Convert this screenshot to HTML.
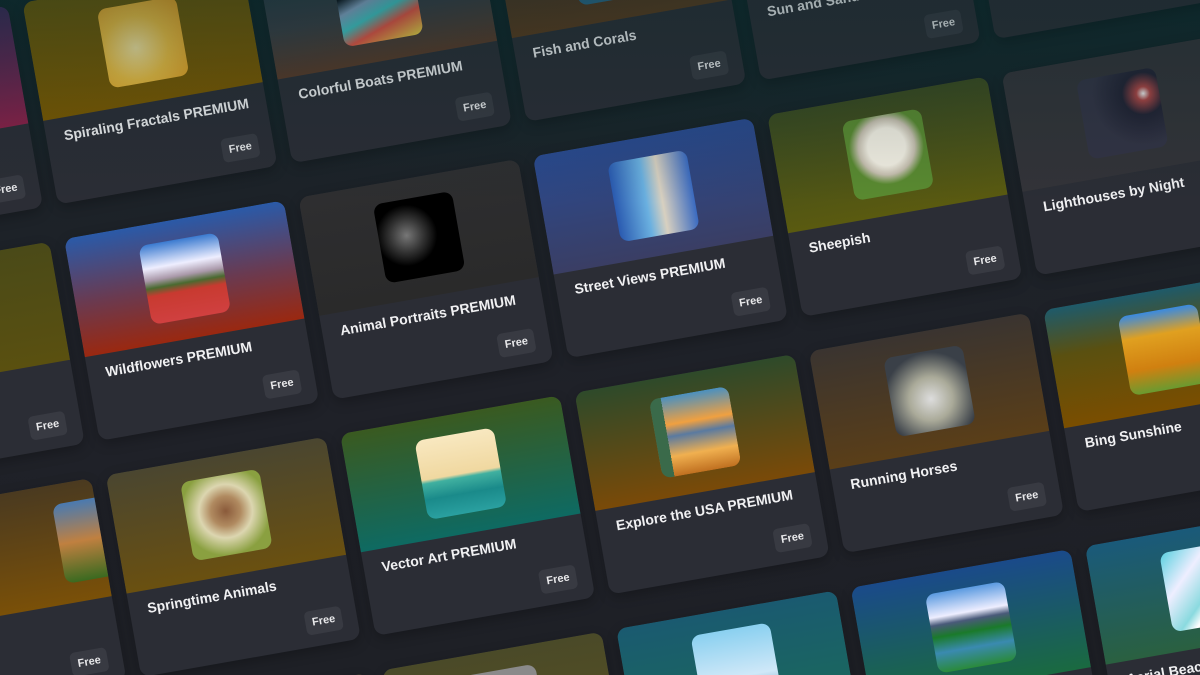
<!DOCTYPE html>
<html><head><meta charset="utf-8"><style>
html,body{margin:0;padding:0;width:1200px;height:675px;overflow:hidden;background:#1f2128;font-family:"Liberation Sans",sans-serif}
#w{position:relative;width:1200px;height:675px;overflow:hidden;background:linear-gradient(180deg,#10282b 0%,#1c2228 25%,#1f2128 60%,#1e2026 100%)}
#g{position:absolute;left:64px;top:239px;transform:rotate(-10deg);transform-origin:0 0}
.c{position:absolute;width:223px;height:205px;border-radius:10px;background:#2b2d35;overflow:hidden;box-shadow:0 4px 12px rgba(0,0,0,.25)}
.i{position:absolute;left:0;top:0;width:223px;height:120px}
.t{position:absolute;left:72px;top:20px;width:80px;height:80px;border-radius:9px;overflow:hidden}
.n{position:absolute;left:18px;top:130px;color:#f0f0f2;font-size:14px;font-weight:bold;white-space:nowrap}
.f{position:absolute;right:15px;bottom:12px;width:37px;height:24px;border-radius:5px;background:#383a42;color:#e8e8ea;font-size:11px;font-weight:bold;text-align:center;line-height:24px}
#ov{position:absolute;left:0;top:0;width:1200px;height:675px;background:linear-gradient(180deg,rgba(10,40,44,.35),rgba(0,0,0,0) 30%);pointer-events:none}
</style></head><body><div id="w">
<div id="g">
<div class="c" style="left:-238px;top:-240px"><div class="i" style="background:linear-gradient(#3a2a5a,#8a2048)"></div><div class="f">Free</div></div>
<div class="c" style="left:0;top:-240px"><div class="i" style="background:linear-gradient(#6a5a08,#7a5800)"></div><div class="t" style="background:radial-gradient(circle at 40% 55%,#f7e6a0,#f0c040 50%,#e8a020)"></div><div class="n">Spiraling Fractals PREMIUM</div><div class="f">Free</div></div>
<div class="c" style="left:238px;top:-240px"><div class="i" style="background:linear-gradient(#1c3a48,#3a3e44 60%,#5a3a28)"></div><div class="t" style="background:linear-gradient(160deg,#0a1018 30%,#8ac 45%,#4cc 60%,#e54 75%,#ed4)"></div><div class="n">Colorful Boats PREMIUM</div><div class="f">Free</div></div>
<div class="c" style="left:476px;top:-240px"><div class="i" style="background:linear-gradient(#3a3028,#5a3a1c)"></div><div class="t" style="background:#2a6a8a"></div><div class="n">Fish and Corals</div><div class="f">Free</div></div>
<div class="c" style="left:714px;top:-240px"><div class="i" style="background:linear-gradient(#2a3a4a,#3a3a40)"></div><div class="n">Sun and Sand</div><div class="f">Free</div></div>
<div class="c" style="left:952px;top:-240px"><div class="i" style="background:#303238"></div><div class="f">Free</div></div>
<div class="c" style="left:-238px;top:0"><div class="i" style="background:linear-gradient(#4a4a18,#5a5010)"></div><div class="f">Free</div></div>
<div class="c" style="left:0;top:0"><div class="i" style="background:linear-gradient(#2a5aa8,#6a3a50 55%,#9a2810)"></div><div class="t" style="background:linear-gradient(#3a7ad0 0%,#eef 30%,#a9a 45%,#4a6a30 55%,#c83a30 65%,#d04040)"></div><div class="n">Wildflowers PREMIUM</div><div class="f">Free</div></div>
<div class="c" style="left:238px;top:0"><div class="i" style="background:linear-gradient(#2e2e30,#2a2a2a)"></div><div class="t" style="background:radial-gradient(circle at 35% 45%,#777 0,#333 25%,#000 45%)"></div><div class="n">Animal Portraits PREMIUM</div><div class="f">Free</div></div>
<div class="c" style="left:476px;top:0"><div class="i" style="background:linear-gradient(#2a4a90,#3a3e64)"></div><div class="t" style="background:linear-gradient(90deg,#2a5ab0,#6ab0e0 40%,#d8d0c0 60%,#3a6ac0)"></div><div class="n">Street Views PREMIUM</div><div class="f">Free</div></div>
<div class="c" style="left:714px;top:0"><div class="i" style="background:linear-gradient(#3a4a20,#5a5a10)"></div><div class="t" style="background:radial-gradient(circle at 50% 40%,#f4f0e4 30%,#c8c0b0 45%,#5a8a30 60%)"></div><div class="n">Sheepish</div><div class="f">Free</div></div>
<div class="c" style="left:952px;top:0"><div class="i" style="background:#333338"></div><div class="t" style="background:radial-gradient(circle at 80% 30%,#eee 0,#a44 8%,#223 25%,#334 60%)"></div><div class="n">Lighthouses by Night</div><div class="f">Free</div></div>
<div class="c" style="left:-238px;top:240px"><div class="i" style="background:linear-gradient(#4a3a20,#7a5008)"></div><div class="t" style="left:180px;background:linear-gradient(#4a7ab0,#c08040 50%,#3a6a20)"></div><div class="f">Free</div></div>
<div class="c" style="left:0;top:240px"><div class="i" style="background:linear-gradient(#4a4630,#6a5010)"></div><div class="t" style="background:radial-gradient(circle at 50% 45%,#8a5a3a 0,#b08a60 25%,#dcd6b0 45%,#8aa040 75%)"></div><div class="n">Springtime Animals</div><div class="f">Free</div></div>
<div class="c" style="left:238px;top:240px"><div class="i" style="background:linear-gradient(#3a5a20,#0e6a62)"></div><div class="t" style="background:linear-gradient(#f8e8c0 0%,#f0d8a0 50%,#40b0a0 55%,#1a8a8a 75%,#2aa0a0)"></div><div class="n">Vector Art PREMIUM</div><div class="f">Free</div></div>
<div class="c" style="left:476px;top:240px"><div class="i" style="background:linear-gradient(#2e4a2a,#7a4a08)"></div><div class="t" style="background:linear-gradient(90deg,#3a6a4a 15%,transparent 15%),linear-gradient(#4a90c0,#f0a040 35%,#5a7aa0 50%,#f0b050 75%,#c07020)"></div><div class="n">Explore the USA PREMIUM</div><div class="f">Free</div></div>
<div class="c" style="left:714px;top:240px"><div class="i" style="background:linear-gradient(#3a3430,#5a3e18)"></div><div class="t" style="background:radial-gradient(circle at 50% 60%,#ddd 0,#aa9 35%,#3a4048 75%)"></div><div class="n">Running Horses</div><div class="f">Free</div></div>
<div class="c" style="left:952px;top:240px"><div class="i" style="background:linear-gradient(#1e5a6a,#5a5010 40%,#7a4e00)"></div><div class="t" style="background:linear-gradient(#3a8ae0,#e0a020 30%,#d08010 70%,#6a9a30)"></div><div class="n">Bing Sunshine</div><div class="f">Free</div></div>
<div class="c" style="left:-238px;top:480px"><div class="i" style="background:linear-gradient(#2a3a40,#3a4a30)"></div><div class="f">Free</div></div>
<div class="c" style="left:0;top:480px"><div class="i" style="background:linear-gradient(#4a4428,#5a4a20)"></div><div class="f">Free</div></div>
<div class="c" style="left:238px;top:480px"><div class="i" style="background:linear-gradient(#4a4a28,#5a5020)"></div><div class="t" style="background:#8a8a8a"></div><div class="n">Birds</div><div class="f">Free</div></div>
<div class="c" style="left:476px;top:480px"><div class="i" style="background:linear-gradient(#1a5a70,#1a6a5a)"></div><div class="t" style="background:linear-gradient(#8ad0f0,#cfe8f8 60%,#4a8ab0)"></div><div class="n">Cartoons</div><div class="f">Free</div></div>
<div class="c" style="left:714px;top:480px"><div class="i" style="background:linear-gradient(#1a4a8a,#1a6a40)"></div><div class="t" style="background:linear-gradient(#5a9ae0,#eef 30%,#4a5a7a 40%,#1a7a2a 55%,#3a8ab0 75%,#2a8a3a)"></div><div class="n">Pixel Art</div><div class="f">Free</div></div>
<div class="c" style="left:952px;top:480px"><div class="i" style="background:linear-gradient(#1a5a7a,#2a6040)"></div><div class="t" style="background:linear-gradient(135deg,#5ad0e0,#eef 30%,#8adadf 55%,#fff 65%,#d0c8a0)"></div><div class="n">Aerial Beaches</div><div class="f">Free</div></div>
</div>
<div id="ov"></div>
</div></body></html>
